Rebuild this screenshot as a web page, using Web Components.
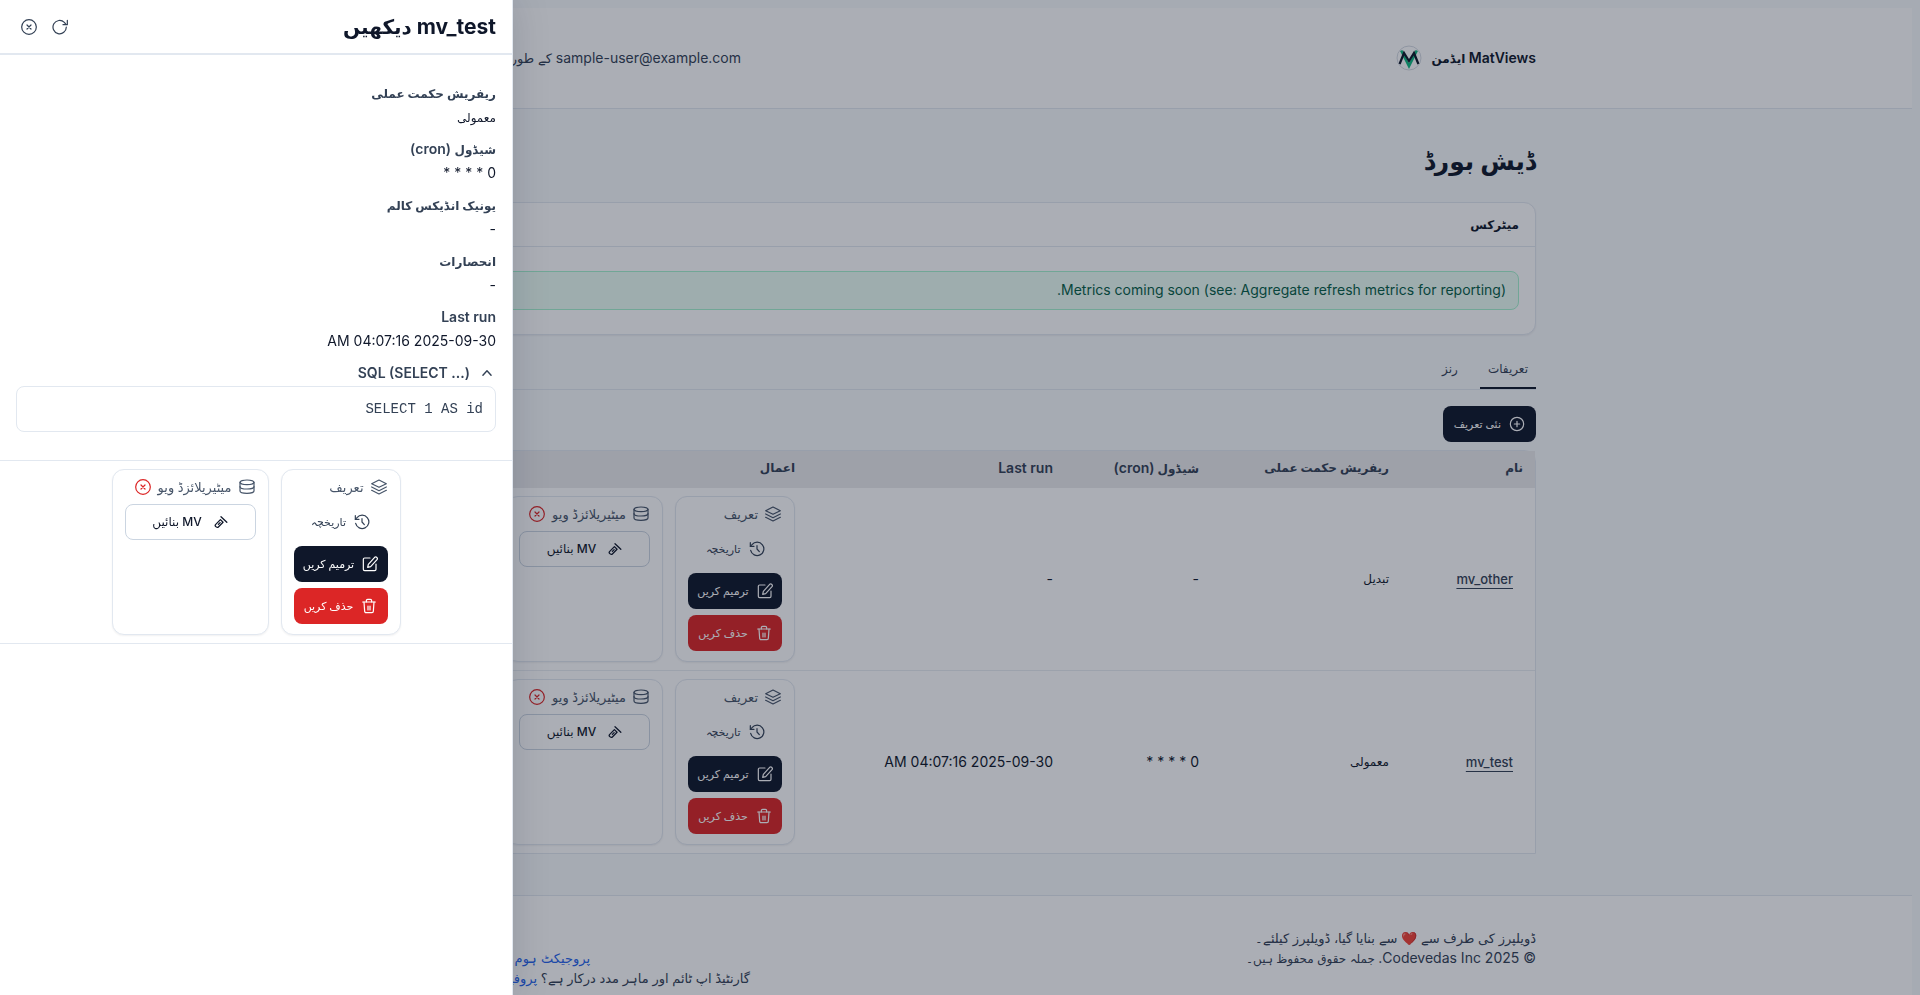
<!DOCTYPE html>
<html lang="ur" dir="rtl">
<head>
<meta charset="utf-8">
<title>MatViews ایڈمن</title>
<style>
  html { overflow: hidden; background: #f8fafc; }
  body {
    margin: 8px;
    color: #0f172a;
    font: 14px/20px Inter, "DejaVu Sans", sans-serif;
  }
</style>
</head>
<body>
<mv-header></mv-header>
<mv-main></mv-main>
<mv-footer></mv-footer>
<mv-drawer></mv-drawer>

<script>
const define = (name, html) => {
  const template = document.createElement('template');
  template.innerHTML = html;
  customElements.define(name, class extends HTMLElement {
    constructor() {
      super();
      this.attachShadow({ mode: 'open' });
      this.shadowRoot.append(template.content.cloneNode(true));
    }
  });
};

const ICONS = {
  close: '<circle cx="12" cy="12" r="11"/><path d="m9 9 6 6M15 9l-6 6"/>',
  refresh: '<path d="M21.500 12a10 10 0 1 1-3-7L21 8"/><path d="M23 2v6.500H16.500"/>',
  plus: '<circle cx="12" cy="12" r="10"/><path d="M12 8v8M8 12h8"/>',
  layers: '<path d="m12 1.500 11 5.500-11 5.500L1 7z"/><path d="m1 12 11 5.500L23 12"/><path d="m1 17 11 5.500L23 17"/>',
  history: '<path d="M2.500 14A10 10 0 1 0 4.500 5.500L2 8"/><path d="M2 2.500V8h5.500"/><path d="M12 7v5l3.500 4"/>',
  edit: '<path d="M12 3H4a2 2 0 0 0-2 2v15a2 2 0 0 0 2 2h15a2 2 0 0 0 2-2v-8"/><path d="M19 2a2.500 2.500 0 0 1 3.500 3.500L13 16l-4.500 1L9.500 12.500z"/>',
  trash: '<path d="M2.500 6h19"/><path d="M19.500 6l-1 14a2 2 0 0 1-2 2h-9a2 2 0 0 1-2-2l-1-14"/><path d="M8 6V4a2 2 0 0 1 2-2h4a2 2 0 0 1 2 2v2"/><path d="M10.500 12v6M13.500 12v6"/>',
  database: '<ellipse cx="12" cy="5" rx="10.500" ry="3.500"/><path d="M1.500 5v13c0 2 4.500 3.500 10.500 3.500s10.500-1.500 10.500-3.500V5"/><path d="M1.500 11.500c0 2 4.500 3.500 10.500 3.500s10.500-1.500 10.500-3.500"/>',
  hammer: '<path d="M3 20c-1.500-1.500-1-3 0-4l8-8 4.500 4.500-8 8c-1 1-3 1-4.500-.5z" stroke-width="2.200"/><path d="m7.500 16 3-3" stroke-width="2.200"/><path d="m12 3 10 9.500" stroke-width="2.200"/>',
  chevron: '<path d="m5 16 7-8 7 8" stroke-width="2.400"/>'
};

customElements.define('mv-icon', class extends HTMLElement {
  constructor() { super(); this.attachShadow({ mode: 'open' }); }
  connectedCallback() {
    this.shadowRoot.innerHTML = `
      <style>
        :host { display: inline-flex; flex: none; width: 16px; height: 16px; }
        :host([small]) { width: 14px; height: 14px; }
        svg { width: 100%; height: 100%; fill: none; stroke: currentColor; stroke-width: 1.8; stroke-linecap: round; stroke-linejoin: round; }
      </style>
      <svg viewBox="0 0 24 24" aria-hidden="true">${ICONS[this.getAttribute('name')]}</svg>`;
  }
});

define('mv-button', `
  <style>
    :host { display: block; }
    button {
      display: flex; align-items: center; justify-content: center; gap: 8px;
      width: 100%; height: 36px; padding: 0 10px;
      border: 1px solid transparent; border-radius: 8px; background: none;
      color: #334155; font: 500 11px/16px Inter, "DejaVu Sans", sans-serif;
      white-space: nowrap; cursor: pointer;
    }
    :host([kind="primary"]) button { background: #0f172a; color: #fff; }
    :host([kind="danger"]) button { background: #dc2626; color: #fff; }
    :host([kind="outline"]) button { background: #fff; color: #0f172a; border-color: #cbd5e1; gap: 12px; font-size: 12px; }
  </style>
  <button type="button"><slot name="icon"></slot><span><slot></slot></span></button>`);

define('mv-group', `
  <style>
    :host {
      display: flex; flex-direction: column; gap: 6px; box-sizing: border-box;
      padding: 8px 12px 10px; background: #fff;
      border: 1px solid #e2e8f0; border-radius: 12px; box-shadow: 0 1px 2px rgba(15, 23, 42, .06);
    }
    header { display: flex; align-items: center; gap: 7px; height: 18px; padding: 0 1px 2px; color: #475569; font-weight: 500; font-size: 13px; white-space: nowrap; }
  </style>
  <header><slot name="title"></slot></header>
  <slot></slot>`);

define('mv-actions', `
  <style>
    :host { display: flex; gap: 12px; }
    mv-group:first-of-type { width: 120px; }
    mv-group:last-of-type { width: 157px; }
    .missing { color: #dc2626; }
  </style>
  <mv-group>
    <mv-icon slot="title" name="layers"></mv-icon><span slot="title">تعریف</span>
    <mv-button><mv-icon slot="icon" name="history"></mv-icon>تاریخچہ</mv-button>
    <mv-button kind="primary"><mv-icon slot="icon" name="edit"></mv-icon>ترمیم کریں</mv-button>
    <mv-button kind="danger"><mv-icon slot="icon" name="trash"></mv-icon>حذف کریں</mv-button>
  </mv-group>
  <mv-group>
    <mv-icon slot="title" name="database"></mv-icon><span slot="title">میٹیریلائزڈ ویو</span>
    <mv-icon slot="title" name="close" class="missing"></mv-icon>
    <mv-button kind="outline"><mv-icon small slot="icon" name="hammer"></mv-icon>MV بنائیں</mv-button>
  </mv-group>`);

define('mv-header', `
  <style>
    :host { display: block; background: #fff; border-bottom: 1px solid #e2e8f0; }
    .bar { display: flex; align-items: center; justify-content: space-between; max-width: 1152px; height: 100px; margin: 0 auto; }
    .brand { display: flex; align-items: center; gap: 10px; font-weight: 600; }
    .brand svg { width: 26px; height: 26px; }
    .brand .ur { font-size: 12px; }
    .user { width: 357px; color: #334155; }
    .user .ur { font-size: 13px; }
  </style>
  <div class="bar">
    <div class="brand">
      <span>MatViews <span class="ur">ایڈمن</span></span>
      <svg viewBox="0 0 26 26" aria-hidden="true">
        <circle cx="13" cy="13" r="12" fill="#fff" stroke="#d5dae2"/>
        <path d="M5.200 5.500 13 21 20.800 5.500" fill="none" stroke="#10b981" stroke-width="2.600"/>
        <path d="M3.600 19 8 8l5 8 5-8 4.400 11" fill="none" stroke="#0f172a" stroke-width="2.200"/>
      </svg>
    </div>
    <div class="user">sample-user@example.com <span class="ur">کے طور پر</span></div>
  </div>`);

define('mv-card', `
  <style>
    :host { display: block; background: #fff; border: 1px solid #e2e8f0; border-radius: 12px; box-shadow: 0 1px 2px rgba(15, 23, 42, .06); }
    h2 { margin: 0; padding: 12px 16px 11px; border-bottom: 1px solid #e2e8f0; font-size: 12px; line-height: 20px; font-weight: 600; }
    .body { padding: 24px 16px; }
  </style>
  <h2><slot name="title"></slot></h2>
  <div class="body"><slot></slot></div>`);

define('mv-alert', `
  <style>
    :host { display: block; padding: 8px 12px 9px; background: #ecfdf5; border: 1px solid #a7f3d0; border-radius: 8px; color: #065f46; }
  </style>
  <slot></slot>`);

define('mv-tabs', `
  <style>
    :host { display: block; border-bottom: 1px solid #e2e8f0; }
    div { display: flex; gap: 8px; }
    button {
      height: 38px; padding: 0 8px; border: 0; border-bottom: 2px solid transparent; background: none;
      color: #334155; font: 500 12px/20px Inter, "DejaVu Sans", sans-serif; cursor: pointer;
    }
    button[aria-selected="true"] { border-color: #0f172a; }
    button + button { padding: 0 14px; }
  </style>
  <div role="tablist">
    <button type="button" role="tab" aria-selected="true">تعریفات</button>
    <button type="button" role="tab" aria-selected="false">رنز</button>
  </div>`);

define('mv-table', `
  <style>
    :host { display: block; border: 1px solid #e2e8f0; border-radius: 0 12px 0 0; background: #fff; }
    table { width: 100%; table-layout: fixed; border-collapse: collapse; text-align: right; }
    .name { width: 134px; } .strategy { width: 190px; } .cron { width: 146px; } .run { width: 258px; }
    th { height: 34px; padding: 0 12px 3px; background: #ebebed; color: #334155; font-size: 12px; font-weight: 600; }
    th span { font-size: 14px; }
    td { height: 166px; padding: 8px 12px; }
    tr + tr td { border-top: 1px solid #e9edf2; }
    td:first-child { padding-right: 22px; }
    td:nth-child(2) { font-size: 12px; }
    a { color: #334155; font-size: 13px; font-weight: 500; text-underline-offset: 4px; }
  </style>
  <table>
    <colgroup><col class="name"><col class="strategy"><col class="cron"><col class="run"><col></colgroup>
    <thead><tr><th>نام</th><th>ریفریش حکمت عملی</th><th>شیڈول <span>(cron)</span></th><th><span>Last run</span></th><th>اعمال</th></tr></thead>
    <tbody>
      <tr><td><a href="#mv_other">mv_other</a></td><td>تبدیل</td><td>-</td><td>-</td><td><mv-actions></mv-actions></td></tr>
      <tr><td><a href="#mv_test">mv_test</a></td><td>معمولی</td><td>0 * * * *</td><td>2025-09-30 04:07:16 AM</td><td><mv-actions></mv-actions></td></tr>
    </tbody>
  </table>`);

define('mv-main', `
  <style>
    :host { display: block; max-width: 1152px; margin: 0 auto; padding: 32px 0 41px; }
    h1 { margin: 0 0 21px; font-size: 25px; line-height: 40px; font-weight: 700; }
    mv-tabs { margin: 16px 0; }
    .new { display: flex; margin-bottom: 8px; }
  </style>
  <h1>ڈیش بورڈ</h1>
  <mv-card>
    <span slot="title">میٹرکس</span>
    <mv-alert>Metrics coming soon (see: Aggregate refresh metrics for reporting).</mv-alert>
  </mv-card>
  <mv-tabs></mv-tabs>
  <div class="new"><mv-button kind="primary"><mv-icon slot="icon" name="plus"></mv-icon>نئی تعریف</mv-button></div>
  <mv-table></mv-table>`);

define('mv-footer', `
  <style>
    :host { display: block; background: #fff; border-top: 1px solid #e2e8f0; color: #334155; }
    .bar { display: flex; justify-content: space-between; max-width: 1152px; margin: 0 auto; padding: 32px 0; font-size: 13px; }
    p { margin: 0; height: 20px; white-space: nowrap; }
    .legal { font-size: 12px; }
    .legal span { font-size: 14px; }
    .links { display: flex; flex-direction: column; align-items: flex-end; padding-top: 20px; }
    .home { width: 206px; } .help { width: 366px; }
    a { color: #2563eb; text-decoration: none; }
  </style>
  <div class="bar">
    <div>
      <p>ڈویلپرز کی طرف سے ❤️ سے بنایا گیا، ڈویلپرز کیلئے۔</p>
      <p class="legal"><span>© 2025 Codevedas Inc.</span> جملہ حقوق محفوظ ہیں۔</p>
    </div>
    <div class="links">
      <p class="home"><a href="#home">پروجیکٹ ہوم پیج</a></p>
      <p class="help">گارنٹیڈ اپ ٹائم اور ماہر مدد درکار ہے؟ <a href="#support">پروفیشنل</a></p>
    </div>
  </div>`);

define('mv-field', `
  <style>
    :host { display: block; }
    dl, dd { margin: 0; }
    dl { display: flex; flex-direction: column; gap: 4px; }
    dt, dd { height: 20px; }
    dt { color: #334155; font-weight: 600; }
  </style>
  <dl><dt><slot name="label"></slot></dt><dd><slot></slot></dd></dl>`);

define('mv-drawer', `
  <style>
    :host { position: fixed; inset: 0; z-index: 10; background: rgba(15, 23, 42, .35); }
    aside {
      box-sizing: border-box; width: 513px; height: 100%; margin-right: auto;
      background: #fff; border-right: 1px solid #e2e8f0; box-shadow: 0 0 36px rgba(15, 23, 42, .15);
    }
    header { display: flex; align-items: center; justify-content: space-between; height: 53px; padding: 0 16px; border-bottom: 2px solid #e2e8f0; }
    h2 { margin: 0; font-size: 21px; line-height: 28px; font-weight: 700; }
    h2 span { font-size: 20px; }
    .tools { display: flex; padding-left: 5px; gap: 15px; }
    .tools button { display: flex; padding: 0; border: 0; background: none; color: #334155; cursor: pointer; }
    .fields { display: flex; flex-direction: column; gap: 12px; padding: 28px 16px; }
    .ur { font-size: 12px; }
    summary { display: flex; align-items: center; gap: 10px; height: 20px; padding-right: 2px; color: #334155; font-weight: 600; list-style: none; cursor: pointer; }
    pre { margin: 3px 0 0; padding: 12px; border: 1px solid #e2e8f0; border-radius: 8px; color: #334155; font: 14px/20px "Liberation Mono", monospace; }
    .actions { display: flex; justify-content: center; padding: 8px 0; border: solid #e2e8f0; border-width: 1px 0; }
  </style>
  <aside role="dialog" aria-label="mv_test">
    <header>
      <h2>mv_test <span>دیکھیں</span></h2>
      <div class="tools">
        <button type="button" aria-label="refresh"><mv-icon name="refresh"></mv-icon></button>
        <button type="button" aria-label="close"><mv-icon name="close"></mv-icon></button>
      </div>
    </header>
    <div class="fields">
      <mv-field><span slot="label" class="ur">ریفریش حکمت عملی</span><span class="ur">معمولی</span></mv-field>
      <mv-field><span slot="label"><span class="ur">شیڈول</span> (cron)</span>0 * * * *</mv-field>
      <mv-field><span slot="label" class="ur">یونیک انڈیکس کالم</span>-</mv-field>
      <mv-field><span slot="label" class="ur">انحصارات</span>-</mv-field>
      <mv-field><span slot="label">Last run</span>2025-09-30 04:07:16 AM</mv-field>
      <details open>
        <summary><mv-icon small name="chevron"></mv-icon><span dir="ltr">SQL (SELECT ...)</span></summary>
        <pre>SELECT 1 AS id</pre>
      </details>
    </div>
    <div class="actions"><mv-actions></mv-actions></div>
  </aside>`);
</script>
</body>
</html>
